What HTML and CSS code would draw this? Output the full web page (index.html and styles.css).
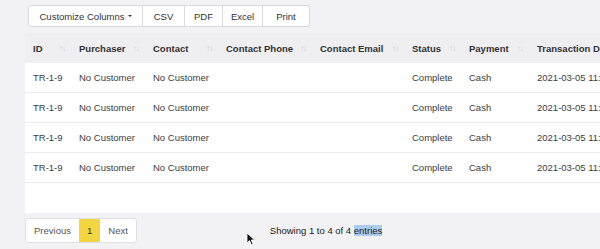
FILE: index.html
```html
<!DOCTYPE html>
<html lang="en">
<head>
    <meta charset="UTF-8">
    <title>Transactions</title>
    <link rel="stylesheet" href="styles.css">
</head>
<body>
    <div class="page">
        <div class="toolbar">
            <button class="tool-btn btn-columns">Customize Columns <span class="caret"></span></button>
            <button class="tool-btn btn-csv">CSV</button>
            <button class="tool-btn btn-pdf">PDF</button>
            <button class="tool-btn btn-excel">Excel</button>
            <button class="tool-btn btn-print">Print</button>
        </div>

        <div class="table-wrap">
            <table class="data-table">
                <colgroup>
                    <col class="col-id">
                    <col class="col-purchaser">
                    <col class="col-contact">
                    <col class="col-phone">
                    <col class="col-email">
                    <col class="col-status">
                    <col class="col-payment">
                    <col class="col-date">
                </colgroup>
                <thead>
                    <tr>
                        <th><div class="th-inner">ID <span class="sort">↑↓</span></div></th>
                        <th><div class="th-inner">Purchaser <span class="sort">↑↓</span></div></th>
                        <th><div class="th-inner">Contact <span class="sort">↑↓</span></div></th>
                        <th><div class="th-inner">Contact Phone <span class="sort">↑↓</span></div></th>
                        <th><div class="th-inner">Contact Email <span class="sort">↑↓</span></div></th>
                        <th><div class="th-inner">Status <span class="sort">↑↓</span></div></th>
                        <th><div class="th-inner">Payment <span class="sort">↑↓</span></div></th>
                        <th><div class="th-inner">Transaction Date <span class="sort">↑↓</span></div></th>
                    </tr>
                </thead>
                <tbody>
                    <tr>
                        <td>TR-1-9</td><td>No Customer</td><td>No Customer</td><td></td><td></td>
                        <td>Complete</td><td>Cash</td><td>2021-03-05 11:42:18</td>
                    </tr>
                    <tr>
                        <td>TR-1-9</td><td>No Customer</td><td>No Customer</td><td></td><td></td>
                        <td>Complete</td><td>Cash</td><td>2021-03-05 11:42:18</td>
                    </tr>
                    <tr>
                        <td>TR-1-9</td><td>No Customer</td><td>No Customer</td><td></td><td></td>
                        <td>Complete</td><td>Cash</td><td>2021-03-05 11:42:18</td>
                    </tr>
                    <tr>
                        <td>TR-1-9</td><td>No Customer</td><td>No Customer</td><td></td><td></td>
                        <td>Complete</td><td>Cash</td><td>2021-03-05 11:42:18</td>
                    </tr>
                </tbody>
            </table>
        </div>

        <div class="footer">
            <div class="pagination">
                <a class="page-link">Previous</a>
                <a class="page-link active">1</a>
                <a class="page-link">Next</a>
            </div>
            <div class="info">Showing 1 to 4 of 4 <span class="selected">entries</span></div>
        </div>
    </div>

    <svg class="cursor" width="10" height="14" viewBox="0 0 10 14">
        <path d="M1 1 L1 11 L3.5 8.6 L5.4 12.8 L7 12.1 L5.2 8 L8.6 8 Z" fill="#111" stroke="#fff" stroke-width="0.8"/>
    </svg>
</body>
</html>
```

FILE: styles.css
```css
:root {
    --page-bg: #f2f1f3;
    --head-bg: #efeef0;
    --text: #3d3d3d;
    --border: #d9d9dc;
    --row-line: #ececee;
    --accent: #f2d53f;
}

* {
    margin: 0;
    padding: 0;
    box-sizing: border-box;
}

body {
    background: var(--page-bg);
    color: var(--text);
    font-family: "Liberation Sans", Arial, sans-serif;
    font-size: 9.5px;
    overflow: hidden;
    width: 600px;
    height: 249px;
}

.page {
    padding: 5px 0 0 25px;
    width: 760px;
}

.toolbar {
    display: flex;
    margin-left: 3px;
    height: 22px;
}

.tool-btn {
    font: inherit;
    color: #333;
    background: #fff;
    border: 1px solid var(--border);
    border-left: none;
    height: 22px;
    display: flex;
    align-items: center;
    justify-content: center;
    gap: 3px;
}

.tool-btn:first-child {
    border-left: 1px solid var(--border);
    border-radius: 3px 0 0 3px;
}

.tool-btn:last-child {
    border-radius: 0 3px 3px 0;
}

.btn-columns { width: 115px; }
.btn-csv { width: 42px; }
.btn-pdf { width: 38px; }
.btn-excel { width: 40px; }
.btn-print { width: 47px; }

.caret {
    width: 0;
    height: 0;
    border-left: 2.5px solid transparent;
    border-right: 2.5px solid transparent;
    border-top: 2.5px solid #333;
}

.table-wrap {
    margin-top: 6px;
    background: #fff;
    padding-bottom: 30px;
}

.data-table {
    border-collapse: separate;
    border-spacing: 0;
    table-layout: fixed;
    width: 735px;
}

.col-id { width: 46px; }
.col-purchaser { width: 74px; }
.col-contact { width: 73px; }
.col-phone { width: 94px; }
.col-email { width: 92px; }
.col-status { width: 57px; }
.col-payment { width: 68px; }
.col-date { width: 231px; }

.data-table th {
    background: var(--head-bg);
    height: 30px;
    padding: 0 6px 0 8px;
    text-align: left;
    font-weight: bold;
    color: #333;
    white-space: nowrap;
}

.th-inner {
    display: flex;
    justify-content: space-between;
    align-items: center;
}

.sort {
    color: #cfcfd2;
    font-weight: normal;
    font-size: 8px;
    letter-spacing: -1px;
}

.data-table td {
    height: 30px;
    padding: 0 8px;
    border-bottom: 1px solid var(--row-line);
    white-space: nowrap;
    overflow: hidden;
}

.footer {
    display: flex;
    align-items: center;
    margin-top: 5px;
}

.pagination {
    display: flex;
    height: 25px;
    background: #fff;
    border: 1px solid #e0e0e2;
    border-radius: 3px;
}

.page-link {
    display: flex;
    align-items: center;
    padding: 0 8px;
    color: #555;
}

.page-link.active {
    background: var(--accent);
    color: #333;
}

.info {
    margin-left: 133px;
    color: #222;
}

.selected {
    background: #abcbf1;
}

.cursor {
    position: absolute;
    left: 246px;
    top: 232px;
}
```
